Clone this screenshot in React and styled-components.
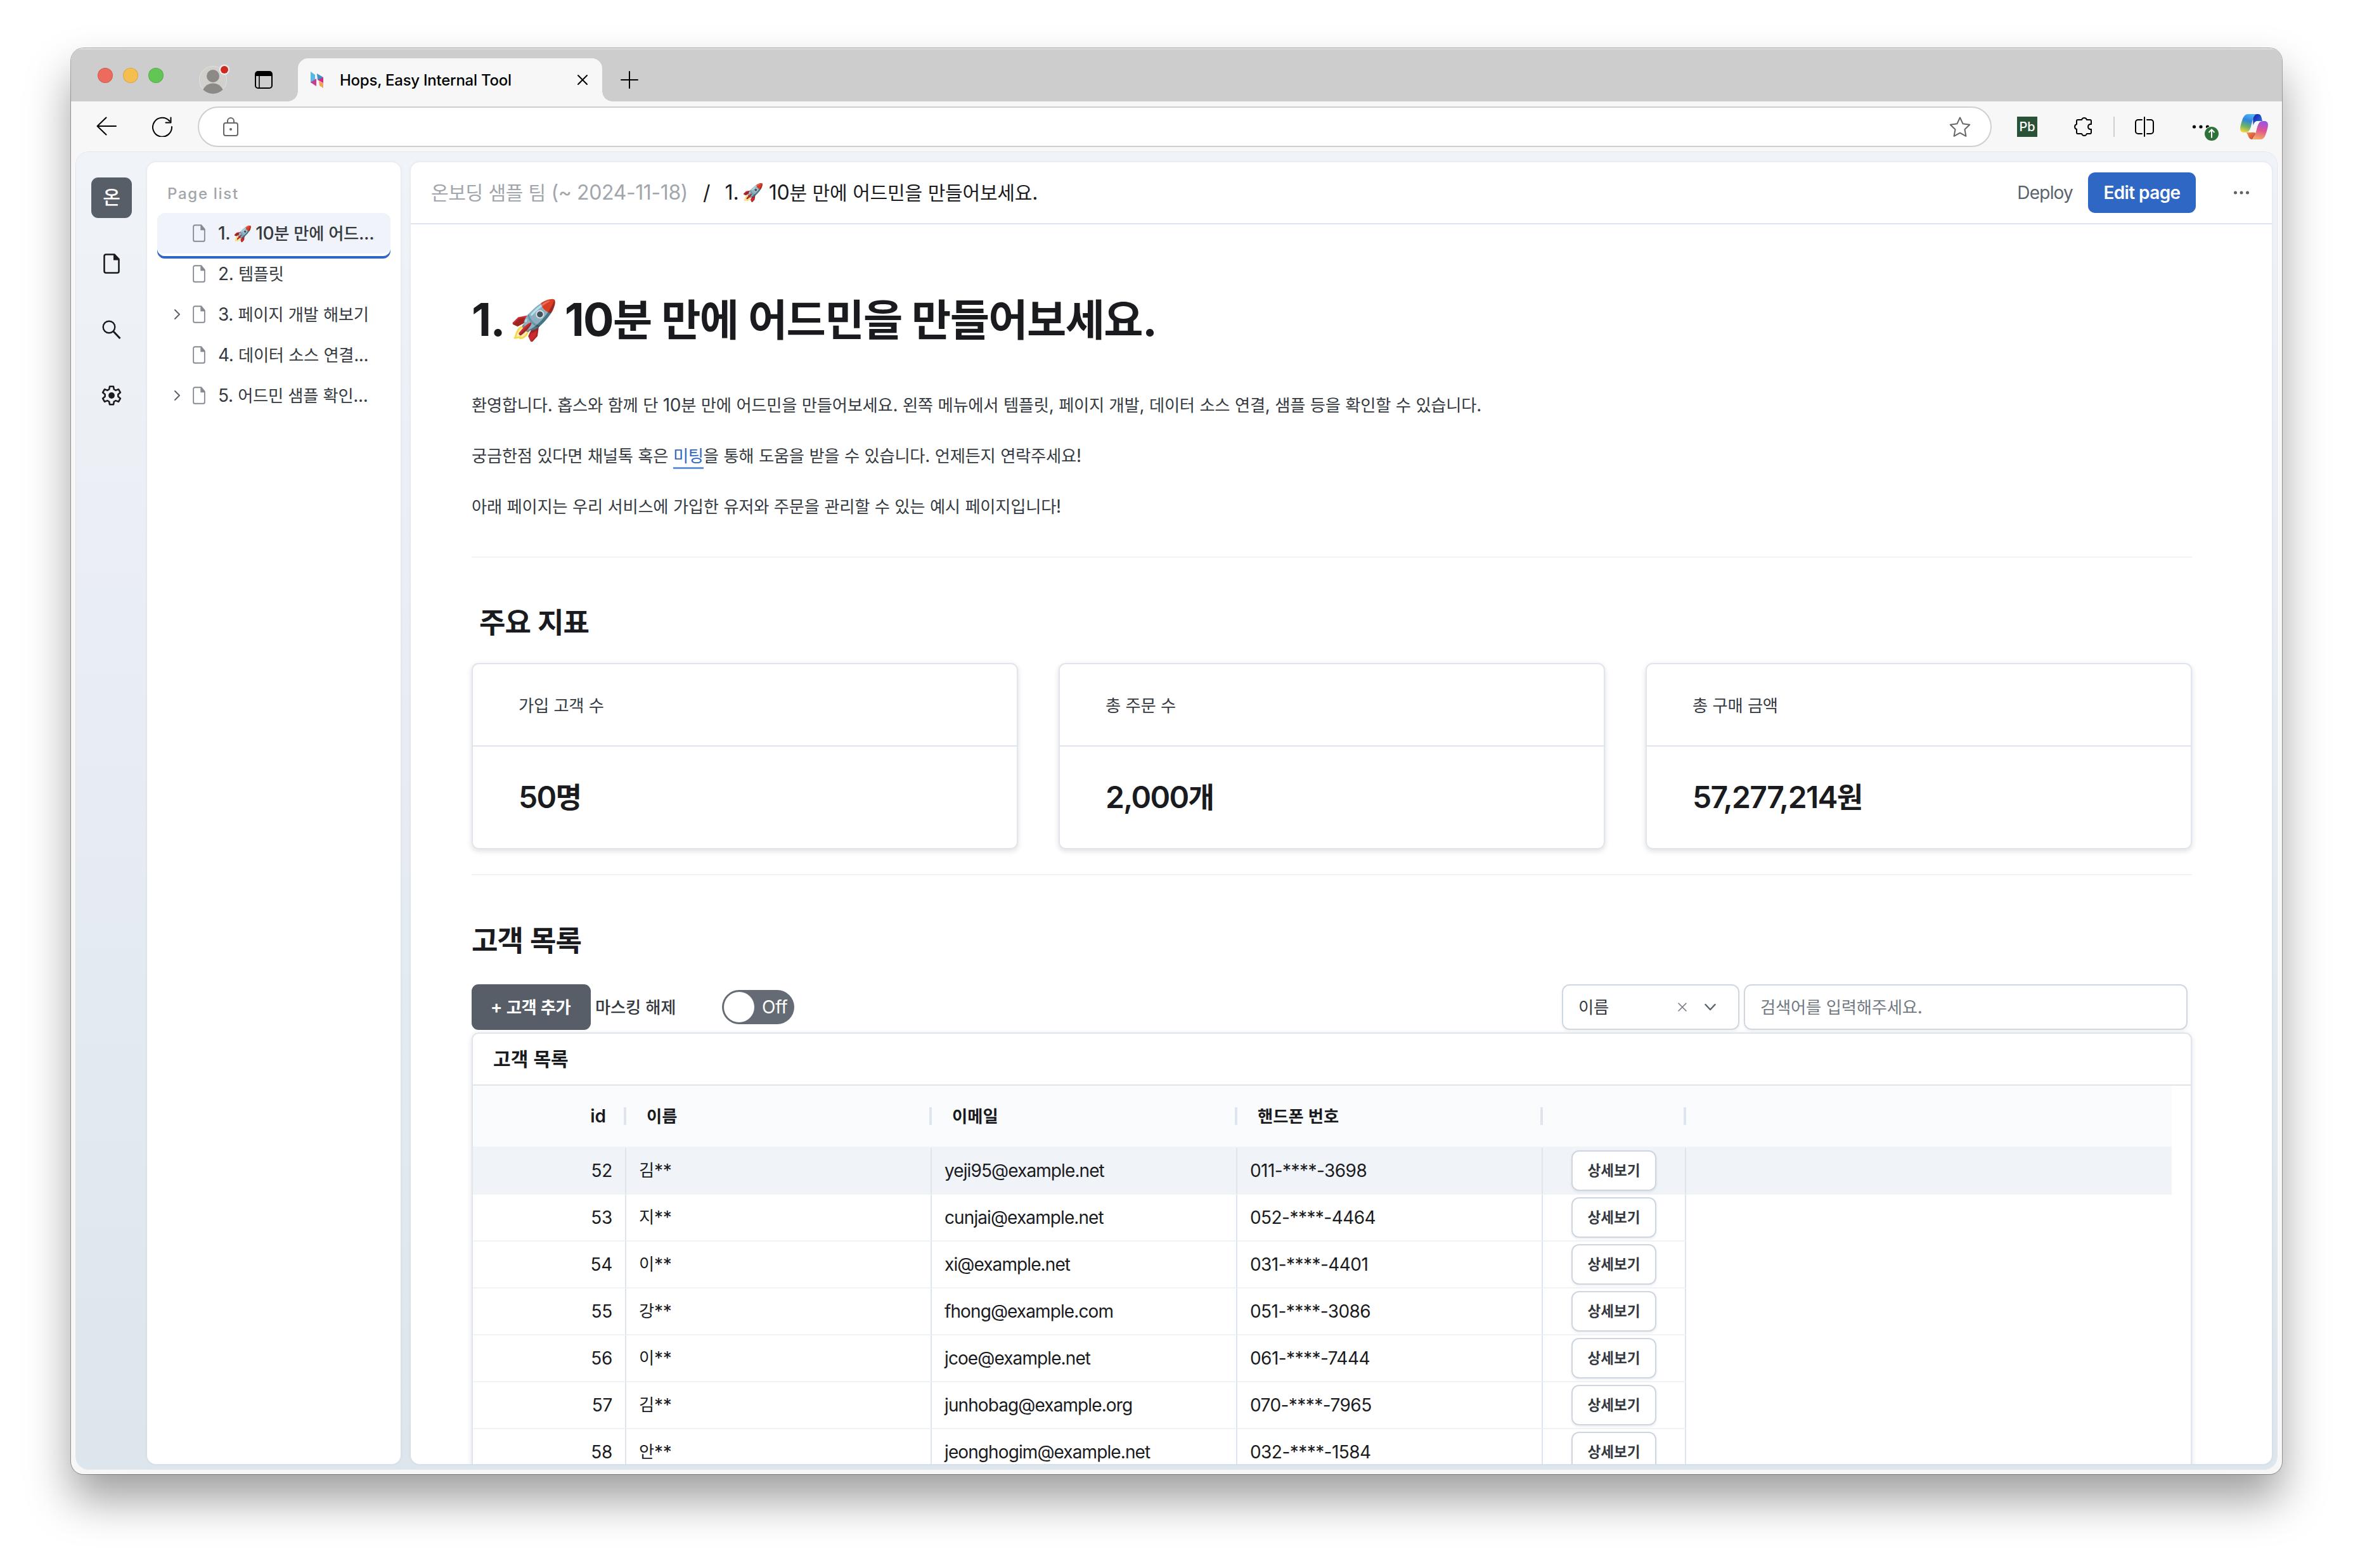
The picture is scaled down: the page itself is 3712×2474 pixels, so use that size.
import { Fragment } from "react";
import styled, { createGlobalStyle } from "styled-components";

const GlobalStyle = createGlobalStyle`
  * {
    box-sizing: border-box;
  }
  body {
    margin: 0;
    background: #fff;
    font-family: Inter, "Noto Sans CJK KR", "Noto Color Emoji", sans-serif;
    color: #1a1b1e;
  }
  h1, h2, p {
    margin: 0;
  }
  button {
    font-family: inherit;
    padding: 0;
    border: 0;
    background: none;
  }
  svg {
    flex-shrink: 0;
  }
`;

const Screen = styled.div`
  width: 3712px;
  height: 2474px;
  padding: 76px 112px 148px;
  overflow: hidden;
`;

const Window = styled.div`
  height: 2250px;
  display: flex;
  flex-direction: column;
  overflow: hidden;
  border-radius: 20px;
  background: #f7f7f7;
  box-shadow: 0 0 0 1px rgba(0, 0, 0, 0.3), 0 40px 70px rgba(0, 0, 0, 0.38);
`;

/* ---------- browser chrome ---------- */

const TitleBar = styled.div`
  display: flex;
  align-items: flex-end;
  height: 84px;
  padding-left: 42px;
  background: #cdcdcd;
  box-shadow: inset 0 2px 0 #e0e0e0;
`;

const TitleItem = styled.div`
  display: flex;
  align-items: center;
  height: 68px;
  margin-left: ${(props) => props.$left || 0}px;
`;

const Lights = styled(TitleItem)`
  gap: 16px;
  padding-bottom: 14px;
`;

const Light = styled.span`
  width: 24px;
  height: 24px;
  border-radius: 50%;
  background: ${(props) => props.$color};
  box-shadow: inset 0 0 0 1px rgba(0, 0, 0, 0.12);
`;

const Tab = styled.div`
  position: relative;
  display: flex;
  align-items: center;
  width: 480px;
  height: 68px;
  margin-left: 40px;
  padding: 0 22px 0 20px;
  border-radius: 16px 16px 0 0;
  background: #f7f7f7;
  &:before,
  &:after {
    content: "";
    position: absolute;
    bottom: 0;
    width: 16px;
    height: 16px;
  }
  &:before {
    left: -16px;
    background: radial-gradient(circle at 0 0, #cdcdcd 15.5px, #f7f7f7 16px);
  }
  &:after {
    right: -16px;
    background: radial-gradient(circle at 100% 0, #cdcdcd 15.5px, #f7f7f7 16px);
  }
`;

const TabTitle = styled.span`
  flex: 1;
  margin-left: 26px;
  font-size: 24px;
  font-weight: 500;
  letter-spacing: -0.25px;
  color: #000;
  white-space: nowrap;
`;

const ToolBar = styled.div`
  display: flex;
  align-items: center;
  height: 80px;
  padding: 0 22px 0 40px;
`;

const AddressBar = styled.div`
  flex: 1;
  display: flex;
  align-items: center;
  justify-content: space-between;
  height: 64px;
  margin: 0 40px 0 40px;
  padding: 0 31px 0 38px;
  border: 2px solid #cfcfcf;
  border-radius: 32px;
  background: #fff;
`;

const ToolItem = styled.span`
  display: flex;
  margin-left: ${(props) => props.$left || 0}px;
`;

const ToolDivider = styled.span`
  width: 2px;
  height: 32px;
  margin-left: 34px;
  background: #cfcfcf;
`;

const PbBadge = styled.span`
  display: flex;
  align-items: center;
  justify-content: center;
  width: 32px;
  height: 32px;
  background: #2b5137;
  color: #fff;
  font-size: 20px;
  font-weight: 500;
`;

/* ---------- app shell ---------- */

const Viewport = styled.div`
  flex: 1;
  display: flex;
  margin: 0 8px 8px;
  padding: 16px 8px 8px 0;
  border-radius: 20px;
  background: linear-gradient(#f0f3f8, #dde5ed);
  box-shadow: 0 0 0 1px #e2e5e9;
  min-height: 0;
`;

const Rail = styled.nav`
  display: flex;
  flex-direction: column;
  align-items: center;
  gap: 40px;
  width: 112px;
  padding-top: 24px;
`;

const Avatar = styled.div`
  width: 64px;
  height: 64px;
  border-radius: 11px;
  background: #575e68;
  color: #fff;
  font-size: 32px;
  font-weight: 500;
  line-height: 62px;
  text-align: center;
`;

const RailItem = styled.span`
  display: flex;
  align-items: center;
  justify-content: center;
  width: 64px;
  height: 64px;
`;

const Panel = styled.section`
  border-radius: 14px;
  background: #fff;
  box-shadow: 0 0 4px rgba(80, 100, 130, 0.12);
  overflow: hidden;
`;

const PageList = styled(Panel)`
  width: 400px;
  margin-right: 16px;
  padding: 33px 16px;
`;

const PageListTitle = styled.div`
  padding-left: 16px;
  margin-bottom: 13px;
  font-size: 24px;
  font-weight: 500;
  line-height: 34px;
  letter-spacing: 1.7px;
  color: #a1a6ac;
`;

const PageItem = styled.div`
  display: flex;
  align-items: center;
  height: 64px;
  padding: 0 14px 0 26px;
  border-radius: 12px;
  background: ${(props) => (props.$active ? "#f0f3f9" : "transparent")};
  box-shadow: ${(props) =>
    props.$active ? "0 4px 0 #fff, 0 8px 0 #2f68c4" : "none"};
`;

const Chevron = styled.span`
  display: flex;
  flex-shrink: 0;
  width: 30px;
`;

const PageName = styled.span`
  margin-left: 20px;
  font-size: 28px;
  font-weight: ${(props) => (props.$active ? 500 : 400)};
  line-height: 40px;
  letter-spacing: -0.35px;
  color: #343a40;
  white-space: nowrap;
`;

const Main = styled(Panel)`
  flex: 1;
`;

const Header = styled.header`
  display: flex;
  align-items: center;
  height: 98px;
  padding: 0 36px 0 32px;
  border-bottom: 2px solid #dfe5ec;
  font-size: 32px;
  line-height: 44px;
  white-space: nowrap;
`;

const Team = styled.span`
  color: #a1a6ac;
  letter-spacing: -0.4px;
`;

const Slash = styled.span`
  margin: 0 23px 0 24px;
`;

const Crumb = styled.span`
  flex: 1;
  letter-spacing: -0.25px;
`;

const Deploy = styled.button`
  margin-right: 24px;
  font-size: 28px;
  letter-spacing: -0.8px;
  color: #5a626c;
`;

const EditButton = styled.button`
  width: 170px;
  height: 64px;
  margin-right: 60px;
  border-radius: 11px;
  background: #2f68c4;
  color: #fff;
  font-size: 28px;
  font-weight: 600;
  letter-spacing: -0.6px;
`;

const Content = styled.div`
  padding: 0 126px 0 96px;
`;

const PageTitle = styled.h1`
  margin-top: 101px;
  font-size: 72px;
  font-weight: 700;
  line-height: 98px;
  height: 100px;
  letter-spacing: -1.6px;
  white-space: nowrap;
`;

const Intro = styled.div`
  display: flex;
  flex-direction: column;
  gap: 40px;
  margin-top: 64px;
  font-size: 28px;
  line-height: 40px;
  letter-spacing: -0.26px;
  color: #343a40;
`;

const MeetingLink = styled.span`
  padding-bottom: 1px;
  border-bottom: 3px solid #6394de;
  color: #2f68c4;
`;

const Rule = styled.div`
  height: 2px;
  margin-top: ${(props) => props.$top}px;
  background: #f0f3f8;
`;

const SectionTitle = styled.h2`
  margin-top: ${(props) => props.$top}px;
  padding-left: ${(props) => props.$indent || 0}px;
  font-size: 48px;
  font-weight: 600;
  line-height: 60px;
  letter-spacing: -1px;
`;

const Cards = styled.div`
  display: grid;
  grid-template-columns: repeat(3, 1fr);
  gap: 64px;
  margin-top: 34px;
`;

const Card = styled.div`
  height: 294px;
  border: 2px solid #dfe5ec;
  border-radius: 11px;
  box-shadow: 0 3px 8px rgba(0, 0, 0, 0.13);
`;

const CardLabel = styled.div`
  height: 130px;
  padding-left: 72px;
  border-bottom: 2px solid #dfe5ec;
  font-size: 28px;
  line-height: 130px;
  letter-spacing: -0.3px;
  color: #343a40;
`;

const CardValue = styled.div`
  padding-left: 72px;
  font-size: 48px;
  font-weight: 600;
  line-height: 160px;
  letter-spacing: -1.7px;
`;

/* ---------- customer list ---------- */

const Controls = styled.div`
  display: flex;
  align-items: center;
  height: 73px;
  margin-top: 38px;
  padding-right: 7px;
  font-size: 28px;
  line-height: 40px;
  letter-spacing: -0.2px;
`;

const AddButton = styled.button`
  width: 188px;
  height: 72px;
  padding-right: 2px;
  border-radius: 11px;
  background: #575e68;
  color: #fff;
  font-size: 28px;
  font-weight: 600;
  letter-spacing: -0.5px;
`;

const MaskLabel = styled.span`
  width: 207px;
  padding-left: 7px;
  font-weight: 500;
  color: #343a40;
`;

const Toggle = styled.span`
  display: flex;
  align-items: center;
  width: 114px;
  height: 54px;
  padding: 3px;
  border-radius: 27px;
  background: #646b74;
  color: #fff;
  margin-right: auto;
`;

const Knob = styled.span`
  width: 48px;
  height: 48px;
  margin-right: 12px;
  border-radius: 50%;
  background: #fff;
`;

const Field = styled.div`
  display: flex;
  align-items: center;
  width: ${(props) => props.$width}px;
  height: 72px;
  margin-left: 7px;
  padding: 0 ${(props) => props.$right || 24}px 0 24px;
  border: 2px solid #cfd8e2;
  border-radius: 12px;
  box-shadow: 0 2px 5px rgba(0, 0, 0, 0.06);
  color: ${(props) => (props.$placeholder ? "#737a83" : "#343a40")};
`;

const FieldValue = styled.span`
  flex: 1;
`;

const FieldIcon = styled.span`
  display: flex;
  margin-left: ${(props) => props.$left || 0}px;
`;

const TablePanel = styled.div`
  height: 900px;
  margin-top: 4px;
  border: 2px solid #dfe5ec;
  border-radius: 11px;
  box-shadow: 0 2px 8px rgba(0, 0, 0, 0.12);
`;

const TableTitle = styled.div`
  height: 82px;
  padding-left: 32px;
  border-bottom: 2px solid #dfe5ec;
  font-size: 32px;
  font-weight: 600;
  line-height: 79px;
`;

const columns = "242px 482px 482px 482px 226px 1fr";

const TableHead = styled.div`
  display: grid;
  grid-template-columns: ${columns};
  align-items: center;
  height: 98px;
  margin-right: 30px;
  border-bottom: 2px solid #f0f3f8;
  background: #fafbfd;
  font-size: 28px;
  font-weight: 600;
`;

const HeadCell = styled.div`
  height: 28px;
  padding: 0 28px 0 32px;
  border-right: ${(props) => (props.$last ? "0" : "4px solid #dfe5ec")};
  line-height: 28px;
  text-align: ${(props) => (props.$right ? "right" : "left")};
`;

const Row = styled.div`
  display: grid;
  grid-template-columns: ${columns};
  height: 74px;
  margin-right: 30px;
  background: ${(props) => (props.$selected ? "#f0f3f8" : "transparent")};
`;

const Cell = styled.div`
  display: flex;
  align-items: center;
  justify-content: ${(props) => props.$align || "flex-start"};
  padding: 0 20px;
  border-right: 2px solid #dfe5ec;
  border-bottom: 2px solid #f0f3f8;
  font-size: 28px;
  letter-spacing: ${(props) => props.$tracking || -0.3}px;
`;

const DetailButton = styled.button`
  width: 134px;
  height: 64px;
  border: 2px solid #cdd6e1;
  border-radius: 12px;
  background: #fff;
  box-shadow: 0 2px 4px rgba(0, 0, 0, 0.07);
  color: #343a40;
  font-size: 24px;
  font-weight: 600;
  line-height: 58px;
`;

// Hangul glyphs run wider than the Latin ones, so they are set slightly smaller
const Hangul = styled.span`
  font-size: 0.94em;
  line-height: 1;
`;

const Emoji = styled.span`
  margin: 0 -0.055em 0 -0.085em;
  font-size: 0.85em;
  line-height: 1;
  vertical-align: 0.06em;
`;

const Text = ({ children }) =>
  children.split(/([가-힣]+|🚀)/).map((part, i) => {
    if (part === "🚀") return <Emoji key={i}>{part}</Emoji>;
    if (i % 2) return <Hangul key={i}>{part}</Hangul>;
    return <Fragment key={i}>{part}</Fragment>;
  });

/* ---------- icons ---------- */

const ProfileIcon = () => (
  <svg width="44" height="44" viewBox="0 0 44 44" overflow="visible">
    <clipPath id="profile">
      <circle cx="22" cy="22" r="22" />
    </clipPath>
    <circle cx="22" cy="22" r="21.5" fill="#d2d0cd" stroke="#e3e2e0" />
    <g clipPath="url(#profile)" fill="#8d8986">
      <circle cx="22" cy="16" r="10" />
      <circle cx="22" cy="45" r="17.5" />
    </g>
    <circle cx="40" cy="6" r="8" fill="#f3f3f3" />
    <circle cx="40" cy="6" r="6" fill="#cf2a20" />
  </svg>
);

const TabsIcon = () => (
  <svg width="28" height="28" viewBox="0 0 28 28">
    <rect x="1" y="1" width="26" height="26" rx="4" fill="none" stroke="#000" strokeWidth="2" />
    <path d="M1 8V5a4 4 0 0 1 4-4h18a4 4 0 0 1 4 4v3z" />
    <path d="M7 8v19" stroke="#000" strokeWidth="1.6" />
  </svg>
);

const Favicon = () => (
  <svg width="20" height="26" viewBox="0 0 20 26">
    <path d="M0 0l7 5v9l-7 4z" fill="#55b9e6" />
    <path d="M10 3l10 6v3l-9 1z" fill="#3f8fc9" />
    <path d="M0 17l9-6v12z" fill="#cf3a94" />
    <path d="M20 9v9l-9-5z" fill="#d12a80" />
    <path d="M13 15l7 3v8l-6-4z" fill="#efa25a" />
  </svg>
);

const StrokeIcon = ({ w, h, d, color = "#000", width = 2 }) => (
  <svg
    width={w}
    height={h}
    viewBox={`0 0 ${w} ${h}`}
    fill="none"
    stroke={color}
    strokeWidth={width}
    strokeLinecap="round"
    strokeLinejoin="round"
  >
    <path d={d} />
  </svg>
);

const LockIcon = () => (
  <svg width="24" height="30" viewBox="0 0 24 30" fill="none" stroke="#666" strokeWidth="2">
    <rect x="1" y="9" width="22" height="20" rx="3" />
    <path d="M7 9V6a5 5 0 0 1 10 0v3" />
    <circle cx="12" cy="19" r="2" fill="#666" stroke="none" />
  </svg>
);

const MoreIcon = () => (
  <svg width="41" height="32" viewBox="0 0 41 32" overflow="visible">
    <circle cx="2.5" cy="16" r="2.6" />
    <circle cx="13" cy="16" r="2.6" />
    <circle cx="23.5" cy="16" r="2.6" />
    <circle cx="30" cy="27" r="12" fill="#f7f7f7" />
    <circle cx="30" cy="27" r="11" fill="#2f7136" />
    <path d="M30 33.5V21M25.5 25l4.5-4.5 4.5 4.5" fill="none" stroke="#fff" strokeWidth="2" />
  </svg>
);

const CopilotIcon = () => (
  <svg width="44" height="40" viewBox="0 0 44 40">
    <defs>
      <linearGradient id="cpLeft" x1="0.6" y1="0" x2="0.3" y2="1">
        <stop offset="0" stopColor="#4fb4f5" />
        <stop offset="0.35" stopColor="#2f86dc" />
        <stop offset="0.7" stopColor="#6fb562" />
        <stop offset="1" stopColor="#f4d63a" />
      </linearGradient>
      <linearGradient id="cpRight" x1="0.6" y1="0" x2="0.4" y2="1">
        <stop offset="0" stopColor="#9a52e6" />
        <stop offset="0.5" stopColor="#e0568f" />
        <stop offset="1" stopColor="#f3ad62" />
      </linearGradient>
      <linearGradient id="cpTop" x1="0" y1="0" x2="1" y2="1">
        <stop offset="0.3" stopColor="#1d36b8" />
        <stop offset="1" stopColor="#2f8be6" />
      </linearGradient>
      <linearGradient id="cpBottom" x1="0" y1="0" x2="1" y2="1">
        <stop offset="0" stopColor="#f5923c" />
        <stop offset="1" stopColor="#c93a4a" />
      </linearGradient>
    </defs>
    <path d="M20 0h8c4 0 5.5 3 7 11h-7c-5 0-6 3-7.5 7z" fill="url(#cpTop)" />
    <path d="M10 29h13l2 2-6 9c-6 0-5.5-6-9-11z" fill="url(#cpBottom)" />
    <path d="M13 0h13c-4 1-5.5 6-7.5 14-2.5 9-3.5 15-10.5 15H6c-6 0-7-5-5-12C4 6 6 0 13 0z" fill="url(#cpLeft)" />
    <path d="M36 11h2c6 0 7 5 5 12-3 11-5 17-11 17H18c4-1 5.5-6 7.5-14 2.5-9 3.5-15 10.5-15z" fill="url(#cpRight)" />
    <path d="M28 11h6c-5 1-6.5 6-8.5 11.5C24 26.5 22 29 17 29h-3c4-1 5.5-5 7-10 1.5-5 2.5-8 7-8z" fill="#f7f7f7" />
  </svg>
);

const FileIcon = ({ w, h, color, width }) => (
  <svg width={w} height={h} viewBox="0 0 26 32" preserveAspectRatio="none">
    <path
      d="M4 1.5h13.5L24.5 9v19a2.5 2.5 0 0 1-2.5 2.5H4A2.5 2.5 0 0 1 1.5 28V4A2.5 2.5 0 0 1 4 1.5z"
      fill="none"
      stroke={color}
      strokeWidth={width}
    />
    <path d="M16 1.5h2L24.5 8.5v2H16z" fill={color} />
  </svg>
);

const SearchIcon = () => (
  <svg width="30" height="30" viewBox="0 0 30 30" fill="none" stroke="#1a1b1e" strokeWidth="2.4">
    <circle cx="11" cy="11" r="9.3" />
    <path d="M17.5 17.5L28.5 29" strokeWidth="3" />
  </svg>
);

const GearIcon = () => (
  <svg width="36" height="36" viewBox="0 0 24 24">
    <path
      fill="none"
      stroke="#1a1b1e"
      strokeWidth="1.7"
      strokeLinejoin="round"
      d="M10 2.5h4l.5 3 1.9 1.1 2.9-1.1 2 3.4-2.4 2v2.2l2.4 2-2 3.4-2.9-1.1-1.900 1.100-.5 3h-4l-.5-3-1.900-1.100-2.900 1.100-2-3.400 2.400-2v-2.200l-2.400-2 2-3.400 2.900 1.100 1.900-1.100z"
    />
    <circle cx="12" cy="12" r="3.3" fill="#1a1b1e" />
  </svg>
);

const DotsIcon = () => (
  <svg width="24" height="8" viewBox="0 0 24 8" fill="#5a626c">
    <circle cx="2.5" cy="4" r="2.5" />
    <circle cx="12" cy="4" r="2.5" />
    <circle cx="21.5" cy="4" r="2.5" />
  </svg>
);

/* ---------- data ---------- */

const pages = [
  { name: "1. 🚀 10분 만에 어드...", active: true },
  { name: "2. 템플릿" },
  { name: "3. 페이지 개발 해보기", nested: true },
  { name: "4. 데이터 소스 연결..." },
  { name: "5. 어드민 샘플 확인...", nested: true },
];

const metrics = [
  { label: "가입 고객 수", value: "50명" },
  { label: "총 주문 수", value: "2,000개" },
  { label: "총 구매 금액", value: "57,277,214원" },
];

const customers = [
  { id: 52, name: "김**", email: "yeji95@example.net", phone: "011-****-3698" },
  { id: 53, name: "지**", email: "cunjai@example.net", phone: "052-****-4464" },
  { id: 54, name: "이**", email: "xi@example.net", phone: "031-****-4401" },
  { id: 55, name: "강**", email: "fhong@example.com", phone: "051-****-3086" },
  { id: 56, name: "이**", email: "jcoe@example.net", phone: "061-****-7444" },
  { id: 57, name: "김**", email: "junhobag@example.org", phone: "070-****-7965" },
  { id: 58, name: "안**", email: "jeonghogim@example.net", phone: "032-****-1584" },
];

const BrowserTop = () => (
  <Fragment>
    <TitleBar>
      <Lights>
        <Light $color="#ed6a5f" />
        <Light $color="#f5bf50" />
        <Light $color="#62c654" />
      </Lights>
      <TitleItem $left={56}>
        <ProfileIcon />
      </TitleItem>
      <TitleItem $left={44}>
        <TabsIcon />
      </TitleItem>
      <Tab>
        <Favicon />
        <TabTitle>Hops, Easy Internal Tool</TabTitle>
        <StrokeIcon w={18} h={18} d="M2 2l14 14M16 2L2 16" />
      </Tab>
      <TitleItem $left={29}>
        <StrokeIcon w={28} h={28} d="M14 1v26M1 14h26" />
      </TitleItem>
    </TitleBar>
    <ToolBar>
      <StrokeIcon w={32} h={32} d="M31 15H2M15.5 1.5L1.5 15l14 13.5" />
      <ToolItem $left={56}>
        <StrokeIcon w={32} h={32} d="M31 16A15 15 0 1 1 27.5 7M29.5 1.5v8h-8" />
      </ToolItem>
      <AddressBar>
        <LockIcon />
        <StrokeIcon
          w={34}
          h={32}
          color="#666"
          d="M17 1.5l4.6 9.8 10.6 1.5-7.7 7.4 1.9 10.6L17 25.7l-9.4 5.1 1.9-10.6-7.7-7.4 10.6-1.5z"
        />
      </AddressBar>
      <PbBadge>Pb</PbBadge>
      <ToolItem $left={58}>
        <StrokeIcon
          w={28}
          h={32}
          d="M6 5h6a4.2 4.2 0 0 1 8 0h5a2 2 0 0 1 2 2v5h-2a4.2 4.2 0 0 0 0 8h2v5a2 2 0 0 1-2 2h-5a4.2 4.2 0 0 1-8 0H6a2 2 0 0 1-2-2v-5a4.2 4.2 0 0 1 0-8V7a2 2 0 0 1 2-2z"
        />
      </ToolItem>
      <ToolDivider />
      <ToolItem $left={32}>
        <StrokeIcon
          w={30}
          h={32}
          d="M15 1v30M11 5H5a4 4 0 0 0-4 4v14a4 4 0 0 0 4 4h6M19 5h6a4 4 0 0 1 4 4v14a4 4 0 0 1-4 4h-6"
        />
      </ToolItem>
      <ToolItem $left={61}>
        <MoreIcon />
      </ToolItem>
      <ToolItem $left={34}>
        <CopilotIcon />
      </ToolItem>
    </ToolBar>
  </Fragment>
);

const SideRail = () => (
  <Rail>
    <Avatar>
      <Text>온</Text>
    </Avatar>
    <RailItem>
      <FileIcon w={26} h={32} color="#1a1b1e" width={2.6} />
    </RailItem>
    <RailItem>
      <SearchIcon />
    </RailItem>
    <RailItem>
      <GearIcon />
    </RailItem>
  </Rail>
);

const PageNav = () => (
  <PageList>
    <PageListTitle>Page list</PageListTitle>
    {pages.map((page) => (
      <PageItem key={page.name} $active={page.active}>
        <Chevron>
          {page.nested ? (
            <StrokeIcon w={12} h={18} color="#5a626c" d="M2 2l7 7-7 7" />
          ) : null}
        </Chevron>
        <FileIcon w={20} h={28} color="#868b93" width={2.4} />
        <PageName $active={page.active}>
          <Text>{page.name}</Text>
        </PageName>
      </PageItem>
    ))}
  </PageList>
);

const CustomerTable = () => (
  <TablePanel>
    <TableTitle>
      <Text>고객 목록</Text>
    </TableTitle>
    <TableHead>
      <HeadCell $right>id</HeadCell>
      <HeadCell>
        <Text>이름</Text>
      </HeadCell>
      <HeadCell>
        <Text>이메일</Text>
      </HeadCell>
      <HeadCell>
        <Text>핸드폰 번호</Text>
      </HeadCell>
      <HeadCell />
      <HeadCell $last />
    </TableHead>
    {customers.map((customer, i) => (
      <Row key={customer.id} $selected={i === 0}>
        <Cell $align="flex-end">{customer.id}</Cell>
        <Cell>
          <Text>{customer.name}</Text>
        </Cell>
        <Cell $tracking={-0.9}>{customer.email}</Cell>
        <Cell $tracking={-0.55}>{customer.phone}</Cell>
        <Cell $align="center">
          <DetailButton>
            <Text>상세보기</Text>
          </DetailButton>
        </Cell>
      </Row>
    ))}
  </TablePanel>
);

const App = () => (
  <Screen>
    <GlobalStyle />
    <Window>
      <BrowserTop />
      <Viewport>
        <SideRail />
        <PageNav />
        <Main>
          <Header>
            <Team>
              <Text>온보딩 샘플 팀 (~ 2024-11-18)</Text>
            </Team>
            <Slash>/</Slash>
            <Crumb>
              <Text>1. 🚀 10분 만에 어드민을 만들어보세요.</Text>
            </Crumb>
            <Deploy>Deploy</Deploy>
            <EditButton>Edit page</EditButton>
            <DotsIcon />
          </Header>
          <Content>
            <PageTitle>
              <Text>1. 🚀 10분 만에 어드민을 만들어보세요.</Text>
            </PageTitle>
            <Intro>
              <p>
                <Text>
                  환영합니다. 홉스와 함께 단 10분 만에 어드민을 만들어보세요. 왼쪽 메뉴에서 템플릿, 페이지 개발, 데이터 소스 연결, 샘플 등을 확인할 수 있습니다.
                </Text>
              </p>
              <p>
                <Text>궁금한점 있다면 채널톡 혹은 </Text>
                <MeetingLink>
                  <Text>미팅</Text>
                </MeetingLink>
                <Text>을 통해 도움을 받을 수 있습니다. 언제든지 연락주세요!</Text>
              </p>
              <p>
                <Text>
                  아래 페이지는 우리 서비스에 가입한 유저와 주문을 관리할 수 있는 예시 페이지입니다!
                </Text>
              </p>
            </Intro>
            <Rule $top={59} />
            <SectionTitle $top={72} $indent={12}>
              <Text>주요 지표</Text>
            </SectionTitle>
            <Cards>
              {metrics.map((metric) => (
                <Card key={metric.label}>
                  <CardLabel>
                    <Text>{metric.label}</Text>
                  </CardLabel>
                  <CardValue>
                    <Text>{metric.value}</Text>
                  </CardValue>
                </Card>
              ))}
            </Cards>
            <Rule $top={39} />
            <SectionTitle $top={73}>
              <Text>고객 목록</Text>
            </SectionTitle>
            <Controls>
              <AddButton>
                <Text>+ 고객 추가</Text>
              </AddButton>
              <MaskLabel>
                <Text>마스킹 해제</Text>
              </MaskLabel>
              <Toggle>
                <Knob />
                Off
              </Toggle>
              <Field $width={280} $right={35}>
                <FieldValue>
                  <Text>이름</Text>
                </FieldValue>
                <FieldIcon>
                  <StrokeIcon w={14} h={14} color="#737a83" width={1.6} d="M1 1l12 12M13 1L1 13" />
                </FieldIcon>
                <FieldIcon $left={28}>
                  <StrokeIcon w={18} h={12} color="#5a626c" width={2.4} d="M1.5 2l7.5 8 7.5-8" />
                </FieldIcon>
              </Field>
              <Field $width={700} $placeholder>
                <FieldValue>
                  <Text>검색어를 입력해주세요.</Text>
                </FieldValue>
              </Field>
            </Controls>
            <CustomerTable />
          </Content>
        </Main>
      </Viewport>
    </Window>
  </Screen>
);

export default App;
